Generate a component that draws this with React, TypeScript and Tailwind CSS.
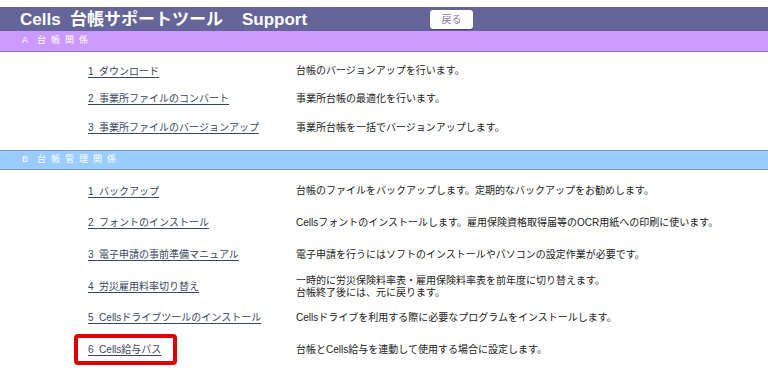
const jp = "font-['Liberation_Sans','Noto_Sans_CJK_JP',sans-serif]";

type Item = { label: string; desc: string[] };

const sectionA: Item[] = [
  { label: "1  ダウンロード", desc: ["台帳のバージョンアップを行います。"] },
  { label: "2  事業所ファイルのコンバート", desc: ["事業所台帳の最適化を行います。"] },
  { label: "3  事業所ファイルのバージョンアップ", desc: ["事業所台帳を一括でバージョンアップします。"] },
];

const sectionB: Item[] = [
  { label: "1  バックアップ", desc: ["台帳のファイルをバックアップします。定期的なバックアップをお勧めします。"] },
  {
    label: "2  フォントのインストール",
    desc: ["Cellsフォントのインストールします。雇用保険資格取得届等のOCR用紙への印刷に使います。"],
  },
  {
    label: "3  電子申請の事前準備マニュアル",
    desc: ["電子申請を行うにはソフトのインストールやパソコンの設定作業が必要です。"],
  },
  {
    label: "4  労災雇用料率切り替え",
    desc: ["一時的に労災保険料率表・雇用保険料率表を前年度に切り替えます。", "台帳終了後には、元に戻ります。"],
  },
  {
    label: "5  Cellsドライブツールのインストール",
    desc: ["Cellsドライブを利用する際に必要なプログラムをインストールします。"],
  },
];

function Row({ item, h }: { item: Item; h: string }) {
  return (
    <div className={`flex items-center ${h}`}>
      <div className="w-[296px] pl-[88px] shrink-0">
        <a href="#" className="text-[#3a4660] underline underline-offset-2 whitespace-pre">
          {item.label}
        </a>
      </div>
      <div className="text-[#222] leading-[12px]">
        {item.desc.map((d) => (
          <div key={d}>{d}</div>
        ))}
      </div>
    </div>
  );
}

function SectionBar({ letter, title, cls }: { letter: string; title: string; cls: string }) {
  return (
    <div className={`flex items-center pl-[22px] text-white text-[9px] tracking-[5px] ${cls}`}>
      <span className="mr-[4px]">{letter}</span>
      <span>{title}</span>
    </div>
  );
}

export default function App() {
  return (
    <div className={`w-[768px] h-[388px] bg-white overflow-hidden pt-[7px] text-[10px] ${jp}`}>
      {/* header */}
      <div className="h-[24px] bg-[#65659a] flex items-center">
        <div className="w-[430px] pl-[20px] text-white text-[17px] font-semibold leading-none whitespace-pre">
          Cells  台帳サポートツール    Support
        </div>
        <button className="w-[43px] h-[19px] bg-white rounded-[3px] text-[#8a7aa8] text-[10px] shadow-[0_1px_1px_rgba(0,0,0,0.3)]">
          戻る
        </button>
      </div>

      {/* A */}
      <SectionBar letter="A" title="台帳関係" cls="h-[21px] bg-[#cc99ff] border-b border-[#9b6fc9]" />
      <div className="pt-[5px]">
        <Row item={sectionA[0]} h="h-[28px]" />
        <Row item={sectionA[1]} h="h-[27px]" />
        <Row item={sectionA[2]} h="h-[31px]" />
      </div>

      {/* B */}
      <SectionBar
        letter="B"
        title="台帳管理関係"
        cls="mt-[7px] h-[20px] bg-[#99ccff] border-t border-b border-[#7e99b8]"
      />
      <div className="pt-[5px]">
        <Row item={sectionB[0]} h="h-[32px]" />
        <Row item={sectionB[1]} h="h-[31px]" />
        <Row item={sectionB[2]} h="h-[33px]" />
        <Row item={sectionB[3]} h="h-[31px]" />
        <Row item={sectionB[4]} h="h-[31px]" />
        <div className="flex items-center h-[33px]">
          <div className="w-[296px] pl-[74px] shrink-0">
            <div className="inline-block border-[4px] border-[#e00000] rounded-[4px] pl-[10px] pr-[12px] py-[4px]">
              <a href="#" className="text-[#3a4660] underline underline-offset-2 whitespace-pre">
                6  Cells給与パス
              </a>
            </div>
          </div>
          <div className="text-[#222]">台帳とCells給与を連動して使用する場合に設定します。</div>
        </div>
      </div>
    </div>
  );
}
